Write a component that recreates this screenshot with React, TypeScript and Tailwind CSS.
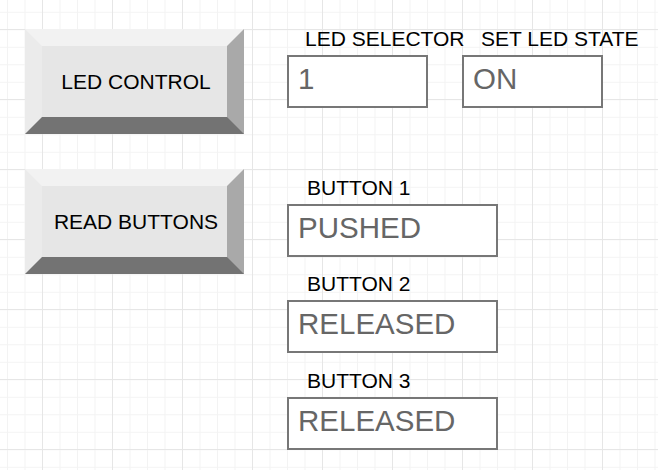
const bevel =
  "box-border flex h-[105px] w-[219px] items-center justify-center border-[17px] border-t-[#f2f2f2] border-l-[#ebebeb] border-r-[#a9a9a9] border-b-[#737373] bg-[#e6e6e6] pl-[3px] text-[21px] leading-[24px] text-black";

const field =
  "box-border h-[53px] w-full border-2 border-[#777777] bg-white pl-[9px] pt-[5px] text-[29.5px] leading-[34px] text-[#666666]";

function BevelButton({ label }: { label: string }) {
  return <div className={bevel}>{label}</div>;
}

function Field({
  label,
  value,
  width,
  labelOffset = "ml-[18px]",
  className = "",
}: {
  label: string;
  value: string;
  width: string;
  labelOffset?: string;
  className?: string;
}) {
  return (
    <div className={`flex flex-col ${width} ${className}`}>
      <span
        className={`${labelOffset} whitespace-nowrap text-[21px] leading-[24px] text-black`}
      >
        {label}
      </span>
      <div className={`mt-[4px] ${field}`}>{value}</div>
    </div>
  );
}

export default function App() {
  return (
    <div className="flex h-[470px] w-[658px] overflow-hidden bg-white bg-[linear-gradient(to_right,#e6e6e6_1px,transparent_1px),linear-gradient(to_bottom,#e6e6e6_1px,transparent_1px),linear-gradient(to_right,#f3f3f3_1px,transparent_1px),linear-gradient(to_bottom,#f3f3f3_1px,transparent_1px)] bg-[size:70px_70px,70px_70px,17.5px_17.5px,17.5px_17.5px] bg-[position:42px_29px,42px_29px,7px_11.8px,7px_11.8px] font-['Liberation_Sans',Arial,sans-serif]">
      <div className="ml-[25px] mt-[29px] flex flex-col gap-[35px]">
        <BevelButton label="LED CONTROL" />
        <BevelButton label="READ BUTTONS" />
      </div>

      <div className="ml-[43px] mt-[27px] flex flex-col">
        <div className="flex gap-[34px]">
          <Field label="LED SELECTOR" value="1" width="w-[141px]" />
          <Field
            label="SET LED STATE"
            value="ON"
            width="w-[141px]"
            labelOffset="ml-[19px]"
          />
        </div>
        <Field
          className="mt-[68px]"
          label="BUTTON 1"
          value="PUSHED"
          width="w-[211px]"
          labelOffset="ml-[20px]"
        />
        <Field
          className="mt-[15px]"
          label="BUTTON 2"
          value="RELEASED"
          width="w-[211px]"
          labelOffset="ml-[20px]"
        />
        <Field
          className="mt-[16px]"
          label="BUTTON 3"
          value="RELEASED"
          width="w-[211px]"
          labelOffset="ml-[20px]"
        />
      </div>
    </div>
  );
}
